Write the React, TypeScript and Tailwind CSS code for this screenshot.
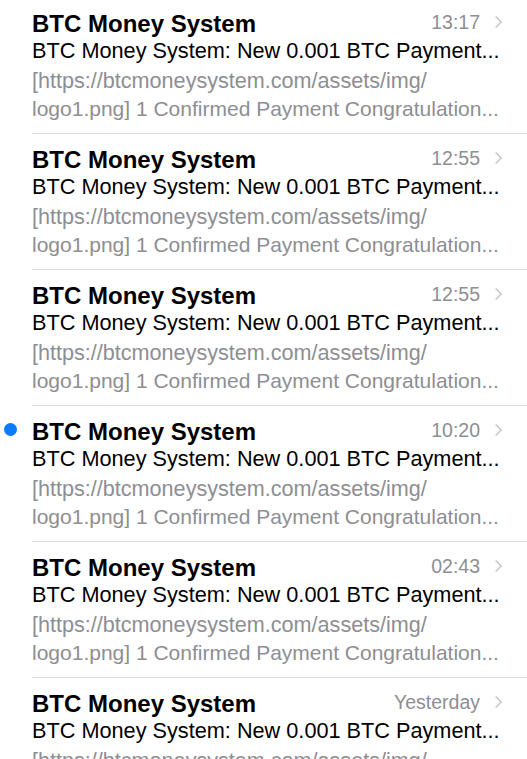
import React from 'react';

interface Message {
  id: number;
  sender: string;
  subject: string;
  previewLine1: string;
  previewLine2: string;
  time: string;
  unread?: boolean;
}

const SUBJECT = 'BTC Money System: New 0.001 BTC Payment...';
const LINE1 = '[https://btcmoneysystem.com/assets/img/';
const LINE2 = 'logo1.png] 1 Confirmed Payment Congratulation...';

const MESSAGES: Message[] = [
  { id: 1, sender: 'BTC Money System', subject: SUBJECT, previewLine1: LINE1, previewLine2: LINE2, time: '13:17' },
  { id: 2, sender: 'BTC Money System', subject: SUBJECT, previewLine1: LINE1, previewLine2: LINE2, time: '12:55' },
  { id: 3, sender: 'BTC Money System', subject: SUBJECT, previewLine1: LINE1, previewLine2: LINE2, time: '12:55' },
  { id: 4, sender: 'BTC Money System', subject: SUBJECT, previewLine1: LINE1, previewLine2: LINE2, time: '10:20', unread: true },
  { id: 5, sender: 'BTC Money System', subject: SUBJECT, previewLine1: LINE1, previewLine2: LINE2, time: '02:43' },
  { id: 6, sender: 'BTC Money System', subject: SUBJECT, previewLine1: LINE1, previewLine2: LINE2, time: 'Yesterday' },
];

function Chevron() {
  return (
    <svg width="8" height="12" viewBox="0 0 8 12" fill="none" className="mt-[5px]">
      <path d="M1.2 1 L6.4 6 L1.2 11" stroke="#c7c7cc" strokeWidth="1.7" strokeLinecap="round" strokeLinejoin="round" />
    </svg>
  );
}

function MessageRow({ message }: { message: Message }) {
  return (
    <div className="flex">
      {/* Unread marker gutter */}
      <div className="w-[32px] shrink-0 pl-[4px] pt-[17px]">
        {message.unread && <div className="h-[13px] w-[13px] rounded-full bg-[#0a7aff]" />}
      </div>

      <div className="min-w-0 flex-1 border-b border-[#dedede] pt-[13px] pb-[10px] pr-[24px]">
        <div className="flex items-start">
          <div className="flex-1 truncate text-[24px] font-bold leading-[26px] text-black">
            {message.sender}
          </div>
          <div className="flex items-start gap-[15px] pl-2">
            <span className="text-[19.5px] leading-[22px] text-[#8e8e93]">{message.time}</span>
            <Chevron />
          </div>
        </div>
        <div className="overflow-hidden whitespace-nowrap text-[21.7px] leading-[27px] text-black">
          {message.subject}
        </div>
        <div className="mt-[3px] text-[#8e8e93]">
          <div className="overflow-hidden whitespace-nowrap text-[21.6px] leading-[28px]">
            {message.previewLine1}
          </div>
          <div className="overflow-hidden whitespace-nowrap text-[21px] leading-[28px]">
            {message.previewLine2}
          </div>
        </div>
      </div>
    </div>
  );
}

export default function App() {
  return (
    <div
      className="h-[759px] w-full overflow-hidden bg-white"
      style={{ fontFamily: '"Liberation Sans", Arial, sans-serif' }}
    >
      <div className="-mt-[2px]">
        {MESSAGES.map((m) => (
          <MessageRow key={m.id} message={m} />
        ))}
      </div>
    </div>
  );
}
